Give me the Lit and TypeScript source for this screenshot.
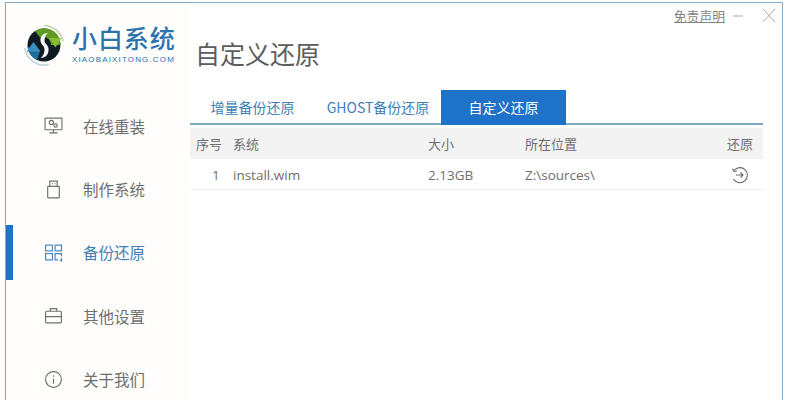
import { LitElement, html, css, svg } from "lit";
import { customElement } from "lit/decorators.js";

const icons: Record<string, unknown> = {
  monitor: svg`<rect x="1" y="2" width="16" height="11" rx=".5"/><path d="M9 13v2.500M5 16h8"/><circle cx="7" cy="6.200" r="2"/><circle cx="11" cy="9" r="1.600"/>`,
  usb: svg`<path d="M5.500 6V1h7v5"/><rect x="3.500" y="6" width="11" height="11" rx=".5"/><path d="M7.500 3.500h.8M10 3.500h.8"/>`,
  backup: svg`<rect x="1.500" y="2" width="6.500" height="5.500"/><path d="M10.500 2h6v5.500h-6z"/><rect x="1.500" y="10" width="6.500" height="6"/><path d="M16.500 12.500V10h-6v6h3"/><path d="M16.500 14v3l-1.500-1"/>`,
  case: svg`<rect x="1.500" y="5" width="15" height="11" rx="1"/><path d="M6 5V2.500h6V5M1.500 10h15"/>`,
  info: svg`<circle cx="9" cy="9" r="7.500"/><path d="M9 8v5M9 5v1.300"/>`,
};

const navItems = [
  { label: "在线重装", icon: "monitor", active: false },
  { label: "制作系统", icon: "usb", active: false },
  { label: "备份还原", icon: "backup", active: true },
  { label: "其他设置", icon: "case", active: false },
  { label: "关于我们", icon: "info", active: false },
];

@customElement("app-root")
export class AppRoot extends LitElement {
  static styles = css`
    :host {
      display: block;
      width: 786px;
      height: 400px;
      overflow: hidden;
      background: #fff;
      box-sizing: border-box;
      padding: 2px 3px 0 5px;
      font-family: "Noto Sans CJK SC", "Open Sans", sans-serif;
      color: #6e6e6e;
    }
    .window {
      box-sizing: border-box;
      height: 420px;
      border: 1px solid #86abc9;
      display: flex;
      position: relative;
    }
    .sidebar { width: 184px; flex: none; background: #fffefd; }
    .brand { height: 91px; display: flex; align-items: flex-start; padding: 21px 0 0 17px; box-sizing: border-box; gap: 7px; }
    .logo { width: 42px; height: 42px; flex: none; }
    .brand-text { display: flex; flex-direction: column; color: #2b73ac; }
    .brand-name { font-family: "Liberation Sans", "Noto Sans CJK SC", sans-serif; font-size: 25px; line-height: 29px; font-weight: 500; letter-spacing: 0.900px; margin-top: 1px; white-space: nowrap; }
    .brand-url { font-family: "Liberation Sans", sans-serif; font-size: 8px; line-height: 10px; letter-spacing: 1.150px; white-space: nowrap; margin-top: 1px; }
    .nav { display: flex; flex-direction: column; }
    .nav-item { height: 63.4px; display: flex; align-items: center; gap: 20px; padding-left: 38px; font-size: 15.500px; color: #6e6e6e; position: relative; }
    .nav-item svg { width: 19px; height: 19px; fill: none; stroke: #707070; stroke-width: 1.100; flex: none; }
    .nav-item.active { color: #3f7fb6; }
    .nav-item.active svg { stroke: #4a86ba; }
    .nav-item.active::before { content: ""; position: absolute; left: 0; top: 4px; width: 7px; height: 55px; background: #1f72c6; }
    .main { flex: 1; min-width: 0; display: flex; flex-direction: column; position: relative; }
    .title { font-size: 25px; line-height: 30px; color: #5c5c5c; padding: 35px 0 0 5px; height: 30px; }
    .top-actions { position: absolute; top: 3px; right: 7px; display: flex; align-items: center; color: #888; font-size: 12.800px; }
    .top-actions a { text-decoration: underline; color: #858585; }
    .top-actions svg { stroke: #a8a8a8; fill: none; stroke-width: 1; }
    .minus { width: 10px; height: 12px; margin: 0 20px 0 8px; }
    .close { width: 12px; height: 13px; }
    .tabs { display: flex; margin: 22px 19px 0 0; border-bottom: 2px solid #7fa9bd; height: 33px; font-size: 14px; color: #3d7fb4; }
    .tab { display: flex; align-items: center; justify-content: center; height: 35px; padding-bottom: 2px; box-sizing: border-box; white-space: nowrap; }
    .tab.first { width: 123px; padding-left: 2px; }
    .tab.second { width: 128px; padding-left: 2px; }
    .tab.on { width: 125px; background: #1e72c8; color: #fff; }
    .row { display: grid; grid-template-columns: 43px 195px 97px 1fr 36px; margin-right: 19px; align-items: center; }
    .head { margin-top: 3px; height: 31px; padding-bottom: 1px; box-sizing: border-box; background: #f3f3f3; font-size: 13px; color: #6e6e6e; }
    .body { height: 31px; padding-top: 2px; box-sizing: border-box; border-bottom: 1px solid #f0f0f0; font-size: 13.500px; font-family: "Open Sans", "Noto Sans CJK SC", sans-serif; color: #6e6e6e; }
    .c0 { padding-left: 6px; }
    .num { padding-left: 22px; }
    .restore { display: block; width: 18px; height: 18px; margin-left: 4px; fill: none; stroke: #6a6a6a; stroke-width: 1.100; }
  `;

  render() {
    return html`<div class="window">
      <aside class="sidebar">
        <div class="brand">
          <svg class="logo" viewBox="0 0 42 42">
            <path d="M21 1.500a19.500 19.500 0 0 1 19 16" fill="none" stroke="#c3d3a8" stroke-width="1.600"/>
            <path d="M1.800 24a19.500 19.500 0 0 0 24 16.500" fill="none" stroke="#bfd3dc" stroke-width="1.600"/>
            <circle cx="21" cy="21" r="16.500" fill="#0e1c22"/>
            <path d="M12 7A16.500 16.500 0 0 1 37.500 21L28 21A8 8 0 0 0 17 13.500z" fill="#5f9a22"/>
            <path d="M26 14h12.500l-6 9.500z" fill="#8cbc36"/>
            <path d="M4.500 23A16.500 16.500 0 0 0 14 36l3-9-8-3z" fill="#1f6f9e"/>
            <path d="M3.500 27.500l7-9.500 7 9.500z" fill="#3b90c2"/>
            <path d="M25 9c-5 0-8 3-7.500 8 .5 4 4 4.500 4 8.500 0 4-1.500 6.500-4 8.500 5.500 0 8.500-4 8-9.500-.4-4-4-4.500-4-8 0-3.500 1.500-6 3.500-7.500z" fill="#f4f8f6"/>
          </svg>
          <div class="brand-text">
            <div class="brand-name">小白系统</div>
            <div class="brand-url">XIAOBAIXITONG.COM</div>
          </div>
        </div>
        <nav class="nav">
          ${navItems.map(
            (n) => html`<div class="nav-item ${n.active ? "active" : ""}">
              <svg viewBox="0 0 18 18">${icons[n.icon]}</svg><span>${n.label}</span>
            </div>`
          )}
        </nav>
      </aside>
      <main class="main">
        <div class="top-actions">
          <a>免责声明</a>
          <svg class="minus" viewBox="0 0 10 12"><path d="M0 6h10"/></svg>
          <svg class="close" viewBox="0 0 12 13"><path d="M0 0l12 13M12 0L0 13"/></svg>
        </div>
        <div class="title">自定义还原</div>
        <div class="tabs">
          <div class="tab first">增量备份还原</div>
          <div class="tab second">GHOST备份还原</div>
          <div class="tab on">自定义还原</div>
        </div>
        <div class="row head">
          <div class="c0">序号</div><div>系统</div><div>大小</div><div>所在位置</div><div>还原</div>
        </div>
        <div class="row body">
          <div class="num">1</div><div>install.wim</div><div>2.13GB</div><div>Z:\\sources\\</div>
          <div>
            <svg class="restore" viewBox="0 0 18 18">
              <path d="M3 4.500A7.500 7.500 0 1 1 2.500 13"/><path d="M1.500 2.500l1.500 3 3-.5"/><path d="M5 9h7M9.500 6.500L12 9l-2.500 2.500"/>
            </svg>
          </div>
        </div>
      </main>
    </div>`;
  }
}
